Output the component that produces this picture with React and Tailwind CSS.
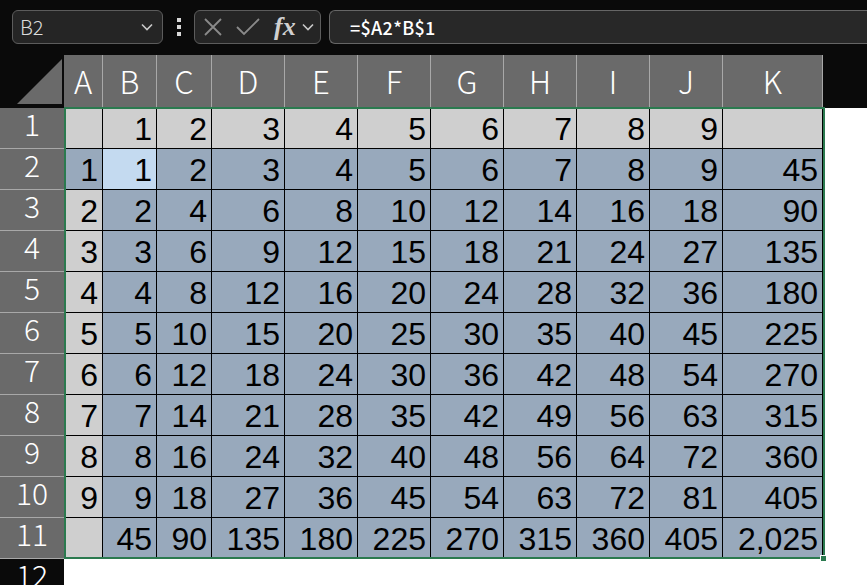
import React from 'react';

const cols = ['A', 'B', 'C', 'D', 'E', 'F', 'G', 'H', 'I', 'J', 'K'];

const fmt = (n) => (n === '' ? '' : n.toLocaleString('en-US'));

// builds the 11 rows of the multiplication table
const buildRows = () => {
  const rows = [];
  rows.push(['', 1, 2, 3, 4, 5, 6, 7, 8, 9, '']);
  for (let i = 1; i <= 9; i++) {
    const r = [i];
    for (let j = 1; j <= 9; j++) r.push(i * j);
    r.push(i * 45);
    rows.push(r);
  }
  const last = [''];
  for (let j = 1; j <= 9; j++) last.push(45 * j);
  last.push(2025);
  rows.push(last);
  return rows;
};

const cellBg = (r, c) => {
  if (r === 0) return 'bg-[#cfcfcf]';
  if (r === 1 && c === 1) return 'bg-[#c4daf0]';
  if (c === 0 && r !== 1) return 'bg-[#cfcfcf]';
  return 'bg-[#98a9bc]';
};

const Chevron = () => (
  <svg width="14" height="10" viewBox="0 0 14 10" fill="none">
    <path d="M2 2.5 L7 7.5 L12 2.5" stroke="#c8c8c8" strokeWidth="1.6" />
  </svg>
);

const App = () => {
  const rows = buildRows();

  return (
    <div className="w-[867px] h-[585px] overflow-hidden bg-[#0a0a0a] relative">
      {/* formula bar */}
      <div className="h-[55px] flex items-start pt-[10px] pl-[12px] gap-0">
        <div className="w-[151px] h-[34px] rounded-[6px] border border-[#5c5c5c] bg-[#252525] flex items-center justify-between pl-[7px] pr-[8px]">
          <span className="text-[20px] text-[#dcdcdc] font-['Noto_Sans_CJK_JP',sans-serif] font-light">B2</span>
          <Chevron />
        </div>
        <div className="w-[31px] h-[34px] flex flex-col items-center justify-center gap-[3px]">
          <span className="w-[4px] h-[4px] bg-[#d8d8d8]"></span>
          <span className="w-[4px] h-[4px] bg-[#d8d8d8]"></span>
          <span className="w-[4px] h-[4px] bg-[#d8d8d8]"></span>
        </div>
        <div className="w-[127px] h-[34px] rounded-[6px] border border-[#5c5c5c] bg-[#252525] flex items-center pl-[8px] pr-[3px]">
          <svg width="20" height="20" viewBox="0 0 20 20" fill="none">
            <path d="M2 2 L18 18 M18 2 L2 18" stroke="#8a8a8a" strokeWidth="1.8" />
          </svg>
          <svg width="24" height="20" viewBox="0 0 24 20" fill="none" className="ml-[13px]">
            <path d="M1 10 L8 17 L23 2" stroke="#8a8a8a" strokeWidth="1.8" />
          </svg>
          <span className="ml-[14px] text-[26px] leading-none italic font-bold text-[#d0d0d0] font-['Liberation_Serif',serif]">fx</span>
          <span className="ml-[5px] flex"><Chevron /></span>
        </div>
        <div className="ml-[8px] flex-1 h-[34px] rounded-l-[6px] border border-r-0 border-[#666] bg-[#282828] flex items-center pl-[20px]">
          <span className="text-[18px] text-white font-['Noto_Sans_CJK_JP',sans-serif] font-medium tracking-[0.3px]">=$A2*B$1</span>
        </div>
      </div>

      {/* sheet */}
      <div className="grid grid-cols-[64px_39px_54px_55px_repeat(7,73px)_100px_1fr] grid-rows-[53px_repeat(11,41px)_1fr] h-[530px]">
        {/* corner */}
        <div className="bg-[#0a0a0a] relative">
          <svg width="64" height="53" viewBox="0 0 64 53" className="absolute inset-0">
            <polygon points="17,49 62,4 62,49" fill="#6a6a6a" />
          </svg>
        </div>
        {cols.map((c) => (
          <div key={c} className="bg-[#6a6a6a] border-r border-[#a8a8a8] flex items-center justify-center text-white text-[31px] leading-none font-['Noto_Sans_CJK_JP',sans-serif] font-light pb-[3px]">
            {c}
          </div>
        ))}
        <div className="bg-[#0a0a0a]"></div>

        {rows.map((row, r) => (
          <React.Fragment key={r}>
            <div className="bg-[#6a6a6a] border-b border-[#a8a8a8] flex justify-center items-start text-white text-[30px] leading-none font-['Noto_Sans_CJK_JP',sans-serif] font-light">
              {r + 1}
            </div>
            {row.map((v, c) => (
              <div
                key={c}
                className={`${cellBg(r, c)} border-r border-b border-black flex items-end justify-end pr-[4px] pb-[3px] text-[32px] leading-none text-black font-['Liberation_Sans',Arial,sans-serif]`}
              >
                {fmt(v)}
              </div>
            ))}
            <div className="bg-white"></div>
          </React.Fragment>
        ))}

        <div className="bg-[#0a0a0a] flex justify-center items-start text-white text-[30px] leading-none font-['Noto_Sans_CJK_JP',sans-serif] font-light">
          12
        </div>
        <div className="bg-white col-span-12"></div>
      </div>

      {/* selection border */}
      <div className="absolute left-[64px] top-[107px] w-[761px] h-[452px] border-2 border-[#2b7a4f] pointer-events-none"></div>
      <div className="absolute left-[820px] top-[555px] w-[7px] h-[7px] bg-[#2b7a4f] border border-white"></div>
    </div>
  );
};

export default App;
